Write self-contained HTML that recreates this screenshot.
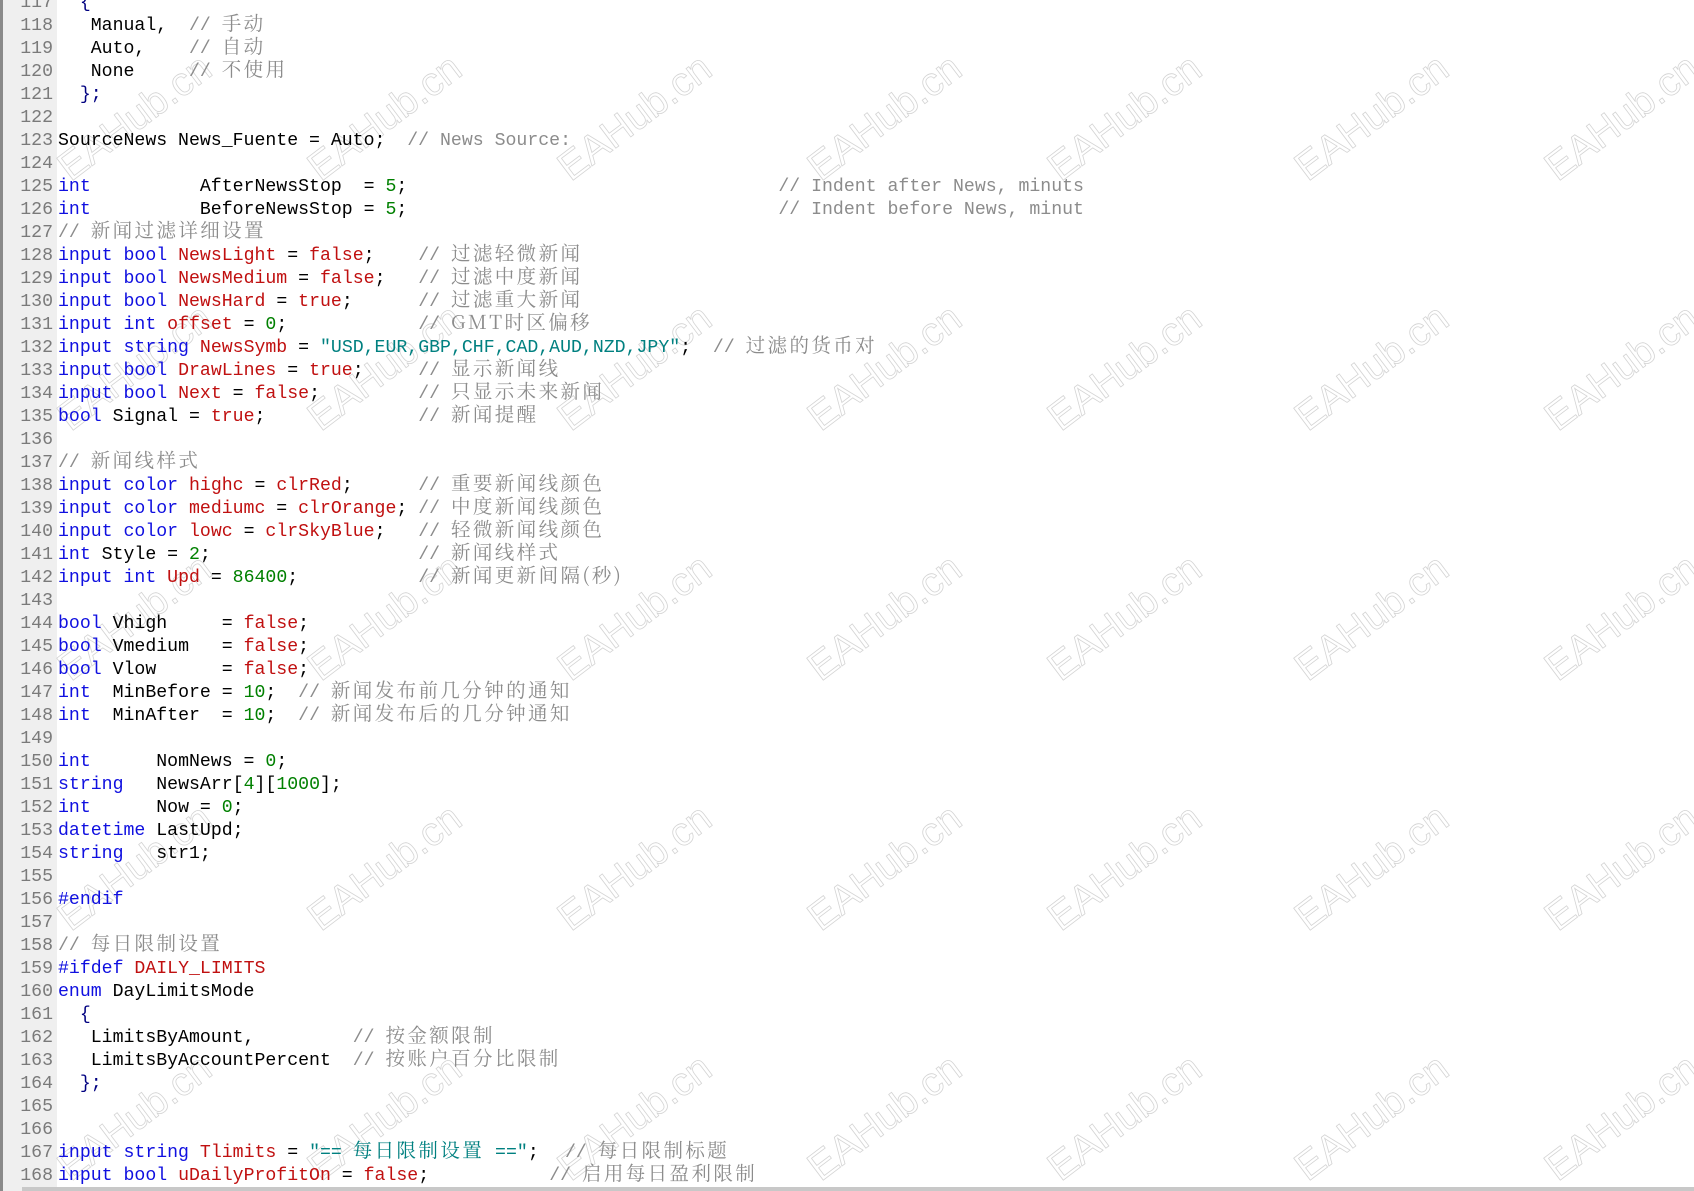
<!DOCTYPE html>
<html><head><meta charset="utf-8"><style>
html,body{margin:0;padding:0;background:#fff;}
body{width:1694px;height:1191px;position:relative;overflow:hidden;}
#gut{position:absolute;left:0;top:0;width:57px;height:1191px;background:#efefef;border-left:3px solid #8a8a8a;box-sizing:border-box;}
#code{position:absolute;left:0;top:-8.5px;}
.l{position:relative;height:23px;line-height:23px;white-space:pre;font-family:"Liberation Mono",monospace;font-size:18.2px;color:#000;}
.n{position:absolute;left:0;top:0;width:53px;text-align:right;color:#7a7a7a;line-height:23px;}
.t{position:absolute;left:58px;top:0;line-height:23px;}
.k{color:#1010e0}.r{color:#c01010}.g{color:#008000}.s{color:#008080}.c{color:#8c8c8c}.b{color:#000080}
.z{font-family:"Noto Serif CJK SC","Noto Sans CJK SC",serif;font-size:19.5px;letter-spacing:2.4px;line-height:10px;vertical-align:baseline;}
.wm{position:absolute;font-family:"Liberation Sans",sans-serif;font-size:40px;color:transparent;-webkit-text-stroke:0.8px #d4d4d4;transform:translate(-50%,-50%) rotate(-37deg);white-space:nowrap;}
#bot{position:absolute;left:22px;right:0;top:1187px;height:4px;background:#c8c8c8;}
</style></head><body>
<div id="gut"></div>
<div class="wm" style="left:135px;top:118px">EAHub.cn</div>
<div class="wm" style="left:385px;top:118px">EAHub.cn</div>
<div class="wm" style="left:635px;top:118px">EAHub.cn</div>
<div class="wm" style="left:885px;top:118px">EAHub.cn</div>
<div class="wm" style="left:1125px;top:118px">EAHub.cn</div>
<div class="wm" style="left:1372px;top:118px">EAHub.cn</div>
<div class="wm" style="left:1622px;top:118px">EAHub.cn</div>
<div class="wm" style="left:135px;top:368px">EAHub.cn</div>
<div class="wm" style="left:385px;top:368px">EAHub.cn</div>
<div class="wm" style="left:635px;top:368px">EAHub.cn</div>
<div class="wm" style="left:885px;top:368px">EAHub.cn</div>
<div class="wm" style="left:1125px;top:368px">EAHub.cn</div>
<div class="wm" style="left:1372px;top:368px">EAHub.cn</div>
<div class="wm" style="left:1622px;top:368px">EAHub.cn</div>
<div class="wm" style="left:135px;top:618px">EAHub.cn</div>
<div class="wm" style="left:385px;top:618px">EAHub.cn</div>
<div class="wm" style="left:635px;top:618px">EAHub.cn</div>
<div class="wm" style="left:885px;top:618px">EAHub.cn</div>
<div class="wm" style="left:1125px;top:618px">EAHub.cn</div>
<div class="wm" style="left:1372px;top:618px">EAHub.cn</div>
<div class="wm" style="left:1622px;top:618px">EAHub.cn</div>
<div class="wm" style="left:135px;top:868px">EAHub.cn</div>
<div class="wm" style="left:385px;top:868px">EAHub.cn</div>
<div class="wm" style="left:635px;top:868px">EAHub.cn</div>
<div class="wm" style="left:885px;top:868px">EAHub.cn</div>
<div class="wm" style="left:1125px;top:868px">EAHub.cn</div>
<div class="wm" style="left:1372px;top:868px">EAHub.cn</div>
<div class="wm" style="left:1622px;top:868px">EAHub.cn</div>
<div class="wm" style="left:135px;top:1118px">EAHub.cn</div>
<div class="wm" style="left:385px;top:1118px">EAHub.cn</div>
<div class="wm" style="left:635px;top:1118px">EAHub.cn</div>
<div class="wm" style="left:885px;top:1118px">EAHub.cn</div>
<div class="wm" style="left:1125px;top:1118px">EAHub.cn</div>
<div class="wm" style="left:1372px;top:1118px">EAHub.cn</div>
<div class="wm" style="left:1622px;top:1118px">EAHub.cn</div>
<div id="code">
<div class="l"><span class="n">117</span><span class="t">  <span class="b">{</span></span></div>
<div class="l"><span class="n">118</span><span class="t">   Manual,  <span class="c">// <span class="z">手动</span></span></span></div>
<div class="l"><span class="n">119</span><span class="t">   Auto,    <span class="c">// <span class="z">自动</span></span></span></div>
<div class="l"><span class="n">120</span><span class="t">   None     <span class="c">// <span class="z">不使用</span></span></span></div>
<div class="l"><span class="n">121</span><span class="t">  <span class="b">};</span></span></div>
<div class="l"><span class="n">122</span></div>
<div class="l"><span class="n">123</span><span class="t">SourceNews News_Fuente = Auto;  <span class="c">// News Source:</span></span></div>
<div class="l"><span class="n">124</span></div>
<div class="l"><span class="n">125</span><span class="t"><span class="k">int</span>          AfterNewsStop  = <span class="g">5</span>;                                  <span class="c">// Indent after News, minuts</span></span></div>
<div class="l"><span class="n">126</span><span class="t"><span class="k">int</span>          BeforeNewsStop = <span class="g">5</span>;                                  <span class="c">// Indent before News, minut</span></span></div>
<div class="l"><span class="n">127</span><span class="t"><span class="c">// <span class="z">新闻过滤详细设置</span></span></span></div>
<div class="l"><span class="n">128</span><span class="t"><span class="k">input bool</span> <span class="r">NewsLight</span> = <span class="r">false</span>;    <span class="c">// <span class="z">过滤轻微新闻</span></span></span></div>
<div class="l"><span class="n">129</span><span class="t"><span class="k">input bool</span> <span class="r">NewsMedium</span> = <span class="r">false</span>;   <span class="c">// <span class="z">过滤中度新闻</span></span></span></div>
<div class="l"><span class="n">130</span><span class="t"><span class="k">input bool</span> <span class="r">NewsHard</span> = <span class="r">true</span>;      <span class="c">// <span class="z">过滤重大新闻</span></span></span></div>
<div class="l"><span class="n">131</span><span class="t"><span class="k">input int</span> <span class="r">offset</span> = <span class="g">0</span>;            <span class="c">// <span class="z">GMT时区偏移</span></span></span></div>
<div class="l"><span class="n">132</span><span class="t"><span class="k">input string</span> <span class="r">NewsSymb</span> = <span class="s">"USD,EUR,GBP,CHF,CAD,AUD,NZD,JPY"</span>;  <span class="c">// <span class="z">过滤的货币对</span></span></span></div>
<div class="l"><span class="n">133</span><span class="t"><span class="k">input bool</span> <span class="r">DrawLines</span> = <span class="r">true</span>;     <span class="c">// <span class="z">显示新闻线</span></span></span></div>
<div class="l"><span class="n">134</span><span class="t"><span class="k">input bool</span> <span class="r">Next</span> = <span class="r">false</span>;         <span class="c">// <span class="z">只显示未来新闻</span></span></span></div>
<div class="l"><span class="n">135</span><span class="t"><span class="k">bool</span> Signal = <span class="r">true</span>;              <span class="c">// <span class="z">新闻提醒</span></span></span></div>
<div class="l"><span class="n">136</span></div>
<div class="l"><span class="n">137</span><span class="t"><span class="c">// <span class="z">新闻线样式</span></span></span></div>
<div class="l"><span class="n">138</span><span class="t"><span class="k">input color</span> <span class="r">highc</span> = <span class="r">clrRed</span>;      <span class="c">// <span class="z">重要新闻线颜色</span></span></span></div>
<div class="l"><span class="n">139</span><span class="t"><span class="k">input color</span> <span class="r">mediumc</span> = <span class="r">clrOrange</span>; <span class="c">// <span class="z">中度新闻线颜色</span></span></span></div>
<div class="l"><span class="n">140</span><span class="t"><span class="k">input color</span> <span class="r">lowc</span> = <span class="r">clrSkyBlue</span>;   <span class="c">// <span class="z">轻微新闻线颜色</span></span></span></div>
<div class="l"><span class="n">141</span><span class="t"><span class="k">int</span> Style = <span class="g">2</span>;                   <span class="c">// <span class="z">新闻线样式</span></span></span></div>
<div class="l"><span class="n">142</span><span class="t"><span class="k">input int</span> <span class="r">Upd</span> = <span class="g">86400</span>;           <span class="c">// <span class="z">新闻更新间隔(秒)</span></span></span></div>
<div class="l"><span class="n">143</span></div>
<div class="l"><span class="n">144</span><span class="t"><span class="k">bool</span> Vhigh     = <span class="r">false</span>;</span></div>
<div class="l"><span class="n">145</span><span class="t"><span class="k">bool</span> Vmedium   = <span class="r">false</span>;</span></div>
<div class="l"><span class="n">146</span><span class="t"><span class="k">bool</span> Vlow      = <span class="r">false</span>;</span></div>
<div class="l"><span class="n">147</span><span class="t"><span class="k">int</span>  MinBefore = <span class="g">10</span>;  <span class="c">// <span class="z">新闻发布前几分钟的通知</span></span></span></div>
<div class="l"><span class="n">148</span><span class="t"><span class="k">int</span>  MinAfter  = <span class="g">10</span>;  <span class="c">// <span class="z">新闻发布后的几分钟通知</span></span></span></div>
<div class="l"><span class="n">149</span></div>
<div class="l"><span class="n">150</span><span class="t"><span class="k">int</span>      NomNews = <span class="g">0</span>;</span></div>
<div class="l"><span class="n">151</span><span class="t"><span class="k">string</span>   NewsArr[<span class="g">4</span>][<span class="g">1000</span>];</span></div>
<div class="l"><span class="n">152</span><span class="t"><span class="k">int</span>      Now = <span class="g">0</span>;</span></div>
<div class="l"><span class="n">153</span><span class="t"><span class="k">datetime</span> LastUpd;</span></div>
<div class="l"><span class="n">154</span><span class="t"><span class="k">string</span>   str1;</span></div>
<div class="l"><span class="n">155</span></div>
<div class="l"><span class="n">156</span><span class="t"><span class="k">#endif</span></span></div>
<div class="l"><span class="n">157</span></div>
<div class="l"><span class="n">158</span><span class="t"><span class="c">// <span class="z">每日限制设置</span></span></span></div>
<div class="l"><span class="n">159</span><span class="t"><span class="k">#ifdef</span> <span class="r">DAILY_LIMITS</span></span></div>
<div class="l"><span class="n">160</span><span class="t"><span class="k">enum</span> DayLimitsMode</span></div>
<div class="l"><span class="n">161</span><span class="t">  <span class="b">{</span></span></div>
<div class="l"><span class="n">162</span><span class="t">   LimitsByAmount,         <span class="c">// <span class="z">按金额限制</span></span></span></div>
<div class="l"><span class="n">163</span><span class="t">   LimitsByAccountPercent  <span class="c">// <span class="z">按账户百分比限制</span></span></span></div>
<div class="l"><span class="n">164</span><span class="t">  <span class="b">};</span></span></div>
<div class="l"><span class="n">165</span></div>
<div class="l"><span class="n">166</span></div>
<div class="l"><span class="n">167</span><span class="t"><span class="k">input string</span> <span class="r">Tlimits</span> = <span class="s">"== <span class="z">每日限制设置</span> =="</span>;</span><span class="t c" style="left:565px">// <span class="z">每日限制标题</span></span></div>
<div class="l"><span class="n">168</span><span class="t"><span class="k">input bool</span> <span class="r">uDailyProfitOn</span> = <span class="r">false</span>;           <span class="c">// <span class="z">启用每日盈利限制</span></span></span></div>
</div>
<div id="bot"></div>
</body></html>
